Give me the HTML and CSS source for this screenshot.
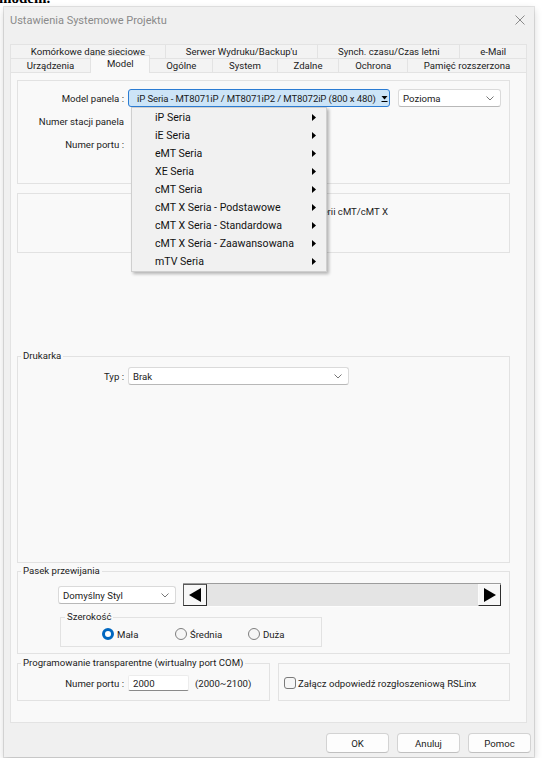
FILE: index.html
```html
<!DOCTYPE html>
<html lang="pl">
<head>
<meta charset="utf-8">
<title>Ustawienia Systemowe Projektu</title>
<link rel="stylesheet" href="styles.css">
</head>
<body>
<div class="doc-clip"><span class="doc-text">modem.</span></div>
<div class="dialog">
  <div class="titlebar">
    <span class="title">Ustawienia Systemowe Projektu</span>
    <svg class="close" viewBox="0 0 10 10" width="10" height="10"><path d="M0.5 0.5 L9.5 9.5 M9.5 0.5 L0.5 9.5" stroke="#8a8a8a" stroke-width="1" fill="none"/></svg>
  </div>

  <div class="tabs">
    <div class="tabrow">
      <div class="tab">Komórkowe dane sieciowe</div>
      <div class="tab">Serwer Wydruku/Backup'u</div>
      <div class="tab">Synch. czasu/Czas letni</div>
      <div class="tab">e-Mail</div>
    </div>
    <div class="tabrow">
      <div class="tab">Urządzenia</div>
      <div class="tab active">Model</div>
      <div class="tab">Ogólne</div>
      <div class="tab">System</div>
      <div class="tab">Zdalne</div>
      <div class="tab">Ochrona</div>
      <div class="tab">Pamięć rozszerzona</div>
    </div>
  </div>

  <div class="panel">
    <div class="box box-model">
      <div class="frow">
        <span class="lbl">Model panela :</span>
        <div class="combo combo-focus">
          <span class="ctext">iP Seria - MT8071iP / MT8071iP2 / MT8072iP (800 x 480)</span>
          <svg class="drop" viewBox="0 0 7 8" width="7" height="8"><polygon points="0.5,1 6.5,1 3.5,4.5" fill="#000"/><path d="M0.5 6.5 H6.5" stroke="#000" stroke-width="1"/></svg>
        </div>
        <div class="combo combo-orient">
          <span class="ctext">Pozioma</span>
          <svg class="chev" viewBox="0 0 8 5" width="8" height="5"><polyline points="0.5,0.5 4,4 7.5,0.5" fill="none" stroke="#777" stroke-width="1"/></svg>
        </div>
      </div>
      <div class="frow"><span class="lbl">Numer stacji panela</span></div>
      <div class="frow"><span class="lbl">Numer portu :</span></div>
    </div>

    <div class="box box-note">
      <div class="note">Obsługa serii cMT/cMT X</div>
    </div>

    <fieldset class="group group-printer">
      <legend>Drukarka</legend>
      <div class="gbody printer-body">
        <div class="frow">
          <span class="lbl">Typ :</span>
          <div class="combo combo-type">
            <span class="ctext">Brak</span>
            <svg class="chev" viewBox="0 0 8 5" width="8" height="5"><polyline points="0.5,0.5 4,4 7.5,0.5" fill="none" stroke="#777" stroke-width="1"/></svg>
          </div>
        </div>
      </div>
    </fieldset>

    <fieldset class="group group-scroll">
      <legend>Pasek przewijania</legend>
      <div class="gbody scroll-body">
        <div class="scroll-row">
          <div class="combo combo-style">
            <span class="ctext">Domyślny Styl</span>
            <svg class="chev" viewBox="0 0 8 5" width="8" height="5"><polyline points="0.5,0.5 4,4 7.5,0.5" fill="none" stroke="#777" stroke-width="1"/></svg>
          </div>
          <div class="scrollbar">
            <div class="sb-btn sb-left"><svg viewBox="0 0 12 14" width="12" height="14"><polygon points="12,0 12,14 0,7" fill="#000"/></svg></div>
            <div class="sb-track"></div>
            <div class="sb-btn sb-right"><svg viewBox="0 0 12 14" width="12" height="14"><polygon points="0,0 0,14 12,7" fill="#000"/></svg></div>
          </div>
        </div>
        <fieldset class="group group-width">
          <legend>Szerokość</legend>
          <div class="radios">
            <label class="radio"><span class="rdot on"></span>Mała</label>
            <label class="radio"><span class="rdot"></span>Średnia</label>
            <label class="radio"><span class="rdot"></span>Duża</label>
          </div>
        </fieldset>
      </div>
    </fieldset>

    <div class="bottom-row">
      <fieldset class="group group-port">
        <legend>Programowanie transparentne (wirtualny port COM)</legend>
        <div class="gbody port-body">
          <div class="frow frow-port">
            <span class="lbl">Numer portu :</span>
            <div class="input">2000</div>
            <span class="range">(2000~2100)</span>
          </div>
        </div>
      </fieldset>
      <div class="box box-rslinx">
        <label class="check"><span class="cbox"></span>Załącz odpowiedź rozgłoszeniową RSLinx</label>
      </div>
    </div>
  </div>

  <div class="buttons">
    <button class="btn">OK</button>
    <button class="btn">Anuluj</button>
    <button class="btn">Pomoc</button>
  </div>

  <div class="menu">
    <div class="mitem"><span>iP Seria</span><svg viewBox="0 0 4 7" width="4" height="7"><polygon points="0,0 4,3.5 0,7" fill="#000"/></svg></div>
    <div class="mitem"><span>iE Seria</span><svg viewBox="0 0 4 7" width="4" height="7"><polygon points="0,0 4,3.5 0,7" fill="#000"/></svg></div>
    <div class="mitem"><span>eMT Seria</span><svg viewBox="0 0 4 7" width="4" height="7"><polygon points="0,0 4,3.5 0,7" fill="#000"/></svg></div>
    <div class="mitem"><span>XE Seria</span><svg viewBox="0 0 4 7" width="4" height="7"><polygon points="0,0 4,3.5 0,7" fill="#000"/></svg></div>
    <div class="mitem"><span>cMT Seria</span><svg viewBox="0 0 4 7" width="4" height="7"><polygon points="0,0 4,3.5 0,7" fill="#000"/></svg></div>
    <div class="mitem"><span>cMT X Seria - Podstawowe</span><svg viewBox="0 0 4 7" width="4" height="7"><polygon points="0,0 4,3.5 0,7" fill="#000"/></svg></div>
    <div class="mitem"><span>cMT X Seria - Standardowa</span><svg viewBox="0 0 4 7" width="4" height="7"><polygon points="0,0 4,3.5 0,7" fill="#000"/></svg></div>
    <div class="mitem"><span>cMT X Seria - Zaawansowana</span><svg viewBox="0 0 4 7" width="4" height="7"><polygon points="0,0 4,3.5 0,7" fill="#000"/></svg></div>
    <div class="mitem"><span>mTV Seria</span><svg viewBox="0 0 4 7" width="4" height="7"><polygon points="0,0 4,3.5 0,7" fill="#000"/></svg></div>
  </div>
</div>
</body>
</html>
```
FILE: styles.css
```css
* { box-sizing: border-box; }
html, body { margin: 0; padding: 0; background: #fff; }
body {
  width: 542px; height: 758px; overflow: hidden;
  font-family: Roboto, "Noto Sans", Arial, sans-serif;
  font-size: 9.6px; color: #1b1b1b;
}

.doc-clip { height: 7px; overflow: hidden; }
.doc-text {
  display: block; margin: -10px 0 0 -1px;
  font: bold 15px/16px "Liberation Serif", serif; color: #000;
}

.dialog {
  position: relative;
  margin-left: 4px; width: 530px; height: 750px;
  background: #f0f0f0;
  box-shadow: 0 0 0 1px rgba(0,0,0,0.10), 0 3px 8px rgba(0,0,0,0.18);
}

.titlebar {
  height: 37px; padding: 7px 0 0 6px;
  display: flex; justify-content: space-between; align-items: flex-start;
}
.title { font-size: 11px; line-height: 14px; color: #8a8a8a; }
.close { margin: 1px 9px 0 0; }

.tabs { margin: 0 7px 0 6px; }
.tabrow { display: flex; height: 14px; }
.tab {
  flex: 1 1 auto; text-align: center; white-space: nowrap;
  line-height: 13px; background: #f3f3f3;
  border-top: 1px solid #e3e3e3; border-right: 1px solid #e3e3e3;
}
.tab:first-child { border-left: 1px solid #e3e3e3; }
.tab.active {
  position: relative; z-index: 2;
  height: 18px; margin: -3px 0 0 -1px; padding-top: 1px;
  line-height: 14px; background: #f9f9f9;
  border-left: 1px solid #e3e3e3;
}

.panel {
  margin: 0 7px 0 6px; height: 651px;
  background: #f9f9f9; border: 1px solid #e3e3e3;
  padding: 7px 16px 0 6px;
}

.box { border: 1px solid #e2e2e2; }
.box-model { height: 104px; padding-top: 8px; }
.frow { display: flex; align-items: center; height: 18px; }
.frow + .frow { margin-top: 5px; }
.lbl { width: 106px; margin-right: 4px; text-align: right; white-space: nowrap; }

.combo {
  height: 18px; display: flex; align-items: center; justify-content: space-between;
  background: #fff; border: 1px solid #dadada; border-bottom-color: #b8b8b8;
  border-radius: 3px; padding: 0 6px 0 4px; white-space: nowrap;
}
.ctext { min-width: 0; }
.combo svg { flex: none; }
.combo-focus {
  width: 262px; background: #cce4f7; border: 1px solid #2b7cd3;
  padding: 0 1px 0 8px; letter-spacing: -0.12px;
}
.combo-orient { width: 103px; margin-left: 8px; }
.combo-type { width: 221px; }
.combo-style { width: 118px; margin-right: 7px; }
.drop { margin: 2px 0 0 1px; }

.box-note { margin-top: 9px; height: 60px; padding-top: 11px; }
.note { width: 370px; text-align: right; line-height: 14px; }

.group { margin: 0; padding: 0; min-width: 0; border: 1px solid #e2e2e2; }
.group legend { margin-left: 3px; padding: 0 2px; line-height: 14px; }

.group-printer { margin-top: 96px; height: 214px; }
.printer-body { padding-top: 4px; }

.group-scroll { margin-top: 1px; height: 90px; }
.scroll-body { padding-top: 5px; }
.scroll-row { display: flex; align-items: center; height: 24px; padding-left: 40px; }
.scrollbar {
  display: flex; width: 318px; height: 24px;
  background: #e4e4e4;
  border-top: 1px solid #9c9c9c; border-bottom: 1px solid #fdfdfd;
}
.sb-btn {
  width: 24px; height: 100%; flex: none;
  display: flex; align-items: center; justify-content: center;
  background: #f7f7f7;
  border: 1px solid; border-color: #5a5a5a #2e2e2e #2e2e2e #5a5a5a;
}
.sb-right { width: 23px; border-color: #fbfbfb #2e2e2e #2e2e2e #fbfbfb; }
.sb-track { flex: 1; }

.group-width { margin: 3px 0 0 42px; width: 262px; height: 37px; }
.group-width legend { margin-left: 4px; }
.radios { display: flex; padding: 3px 0 0 41px; }
.radio { width: 76px; height: 14px; display: flex; align-items: center; gap: 3px; }
.rdot {
  width: 12px; height: 12px; border-radius: 50%; flex: none;
  border: 1px solid #7f7f7f; background: #f6f6f6;
}
.rdot.on { border: 3px solid #0067c0; background: #fff; }

.bottom-row { display: flex; align-items: flex-start; gap: 8px; margin-top: 2px; }
.group-port { width: 253px; height: 45px; }
.port-body { padding-top: 5px; }
.frow-port { height: 16px; }
.input {
  width: 61px; height: 16px; padding-left: 4px; line-height: 15px;
  background: #fff; border: 1px solid #ececec; border-bottom-color: #8a8a8a;
  border-radius: 2px;
}
.range { margin-left: 6px; }
.box-rslinx { width: 232px; height: 38px; margin-top: 7px; padding: 12px 0 0 5px; }
.check { display: flex; align-items: center; gap: 2px; height: 14px; white-space: nowrap; }
.cbox {
  width: 12px; height: 12px; flex: none;
  border: 1px solid #7a7a7a; border-radius: 3px; background: #f6f6f6;
}

.buttons { display: flex; justify-content: flex-end; gap: 8px; margin: 10px 3px 0 0; }
.btn {
  width: 63px; height: 20px; padding: 0;
  font: inherit; color: #1b1b1b;
  background: #fdfdfd; border: 1px solid #d3d3d3; border-bottom-color: #c0c0c0;
  border-radius: 4px;
}

.menu {
  position: absolute; left: 127px; top: 100px; z-index: 5;
  width: 196px; padding: 0 0 1px;
  background: #f1f1f1; border: 1px solid #cfcfcf;
  box-shadow: 2px 2px 3px rgba(0,0,0,0.28);
  font-size: 10.6px; color: #111;
}
.mitem {
  height: 18px; display: flex; align-items: center; justify-content: space-between;
  padding: 0 10px 0 23px; white-space: nowrap;
}
```
